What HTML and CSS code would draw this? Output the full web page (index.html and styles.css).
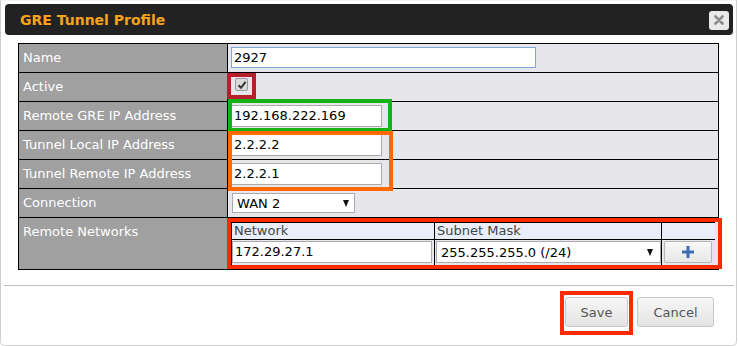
FILE: index.html
```html
<!DOCTYPE html>
<html>
<head>
<meta charset="utf-8">
<link rel="stylesheet" href="styles.css">
</head>
<body>
<div class="dialog">
  <div class="titlebar">
    <span class="title">GRE Tunnel Profile</span>
    <span class="close"><svg width="10" height="10" viewBox="0 0 10 10"><path d="M1.5 1.5L8.5 8.5M8.5 1.5L1.5 8.5" stroke="#8c8c8c" stroke-width="2.6" stroke-linecap="round"/></svg></span>
  </div>
  <div class="form">
    <div class="lbl">Name</div>
    <div class="val"><div class="input name-input">2927</div></div>
    <div class="lbl">Active</div>
    <div class="val"><span class="check"><svg width="10" height="10" viewBox="0 0 10 10"><path d="M1.5 5.2L4 7.8L8.6 1.8" fill="none" stroke="#333" stroke-width="2"/></svg></span></div>
    <div class="lbl">Remote GRE IP Address</div>
    <div class="val"><div class="input ip-input">192.168.222.169</div></div>
    <div class="lbl">Tunnel Local IP Address</div>
    <div class="val"><div class="input ip-input">2.2.2.2</div></div>
    <div class="lbl">Tunnel Remote IP Address</div>
    <div class="val"><div class="input ip-input">2.2.2.1</div></div>
    <div class="lbl">Connection</div>
    <div class="val"><div class="select conn-select"><span>WAN 2</span><span class="arrow"></span></div></div>
    <div class="lbl">Remote Networks</div>
    <div class="val net-cell">
      <div class="nets">
        <div class="nh">Network</div>
        <div class="nh">Subnet Mask</div>
        <div class="nh"></div>
        <div class="nc"><div class="input net-input">172.29.27.1</div></div>
        <div class="nc"><div class="select mask-select"><span>255.255.255.0 (/24)</span><span class="arrow"></span></div></div>
        <div class="nc"><div class="addbtn"><svg width="12" height="12" viewBox="0 0 12 12"><rect x="0" y="4.5" width="12" height="3" fill="#3b6db4"/><rect x="4.5" y="0" width="3" height="12" fill="#3b6db4"/></svg></div></div>
      </div>
    </div>
  </div>
  <div class="sep"></div>
  <div class="footer">
    <button class="btn save">Save</button>
    <button class="btn cancel">Cancel</button>
  </div>
  <div class="mark mark-active"></div>
  <div class="mark mark-green"></div>
  <div class="mark mark-orange"></div>
  <div class="mark mark-nets"></div>
  <div class="mark mark-save"></div>
</div>
</body>
</html>
```
FILE: styles.css
```css
html, body {
  margin: 0;
  padding: 0;
  background: #fff;
}
body {
  font-family: "DejaVu Sans", Verdana, sans-serif;
  font-size: 13px;
  color: #000;
}
.dialog {
  position: relative;
  box-sizing: border-box;
  width: 737px;
  height: 346px;
  border: 1px solid #cfcfcf;
  border-top-color: #f4f4f4;
  border-radius: 0 0 5px 5px;
}
.titlebar {
  margin: 3px 0 0 4px;
  width: 728px;
  height: 31px;
  background: #222;
  border-radius: 4px;
  display: flex;
  align-items: center;
  justify-content: space-between;
  box-sizing: border-box;
  padding: 0 4px 0 15px;
}
.title {
  color: #f5a31e;
  font-weight: bold;
  font-size: 14px;
}
.close {
  width: 20px;
  height: 19px;
  background: #e9e9e9;
  border-radius: 3px;
  display: flex;
  align-items: center;
  justify-content: center;
  margin-top: 1px;
}
.form {
  margin: 8px 0 0 17px;
  width: 701px;
  display: grid;
  grid-template-columns: 208px 490px;
  grid-template-rows: 28px 28px 28px 28px 28px 28px 51px;
  gap: 1px;
  padding: 1px;
  box-sizing: border-box;
  background: #000;
}
.lbl {
  background: #a0a0a0;
  color: #fff;
  padding: 6px 0 0 4px;
  line-height: 16px;
  white-space: nowrap;
}
.val {
  background: #e6e6eb;
  padding: 3px 0 0 3px;
}
.input {
  box-sizing: border-box;
  height: 22px;
  border: 1px solid #aaa;
  background: #fff;
  padding: 0 2px;
  line-height: 20px;
  white-space: nowrap;
}
.name-input {
  width: 305px;
  height: 21px;
  line-height: 19px;
  border-color: #7ea6d8;
}
.ip-input {
  width: 151px;
}
.check {
  display: flex;
  align-items: center;
  justify-content: center;
  box-sizing: border-box;
  width: 13px;
  height: 13px;
  margin: 2px 0 0 4px;
  border: 1px solid #9a9a9a;
  border-radius: 2px;
  background: #dcdcdc;
}
.select {
  box-sizing: border-box;
  display: flex;
  align-items: center;
  justify-content: space-between;
  background: #fff;
  border: 1px solid #aaa;
  padding: 0 5px 0 4px;
  white-space: nowrap;
}
.conn-select {
  width: 123px;
  height: 20px;
  margin: 1px 0 0 1px;
}
.arrow {
  width: 0;
  height: 0;
  border-left: 3.5px solid transparent;
  border-right: 3.5px solid transparent;
  border-top: 7px solid #111;
}
.net-cell {
  padding: 4px 0 0 3px;
}
.nets {
  width: 484px;
  display: grid;
  grid-template-columns: 202px 226px 53px;
  grid-template-rows: 16px 25px;
  gap: 1px;
  padding: 1px;
  box-sizing: border-box;
  background: #000;
}
.nh {
  background: #e9eff9;
  color: #444;
  line-height: 16px;
  padding-left: 2px;
}
.nc {
  background: #e6e6eb;
  padding: 1px 1px 0 1px;
}
.net-input {
  width: 200px;
  height: 22px;
  margin-left: -1px;
}
.mask-select {
  width: 225px;
  height: 22px;
  border-color: #aaa;
  padding-right: 7px;
}
.addbtn {
  box-sizing: border-box;
  width: 48px;
  height: 22px;
  margin-left: 1px;
  border: 1px solid #b5b5b5;
  border-radius: 2px;
  background: linear-gradient(#f8f8f8, #e7e7e7);
  display: flex;
  align-items: center;
  justify-content: center;
}
.sep {
  margin: 15px 2px 0 3px;
  height: 1px;
  background: #bdbdbd;
}
.footer {
  display: flex;
  justify-content: flex-end;
  gap: 9px;
  padding: 11px 22px 0 0;
}
.btn {
  box-sizing: border-box;
  height: 30px;
  border: 1px solid #c8c8c8;
  border-radius: 3px;
  background: linear-gradient(#f6f6f6, #e4e4e4);
  color: #555;
  font-family: "DejaVu Sans", Verdana, sans-serif;
  font-size: 13px;
  padding: 0;
}
.save {
  width: 63px;
}
.cancel {
  width: 77px;
}
.mark {
  position: absolute;
  box-sizing: border-box;
  border: 4px solid red;
}
.mark-active {
  left: 226px;
  top: 72px;
  width: 29px;
  height: 26px;
  border-color: #b3222c;
}
.mark-green {
  left: 227px;
  top: 98px;
  width: 164px;
  height: 33px;
  border-color: #15b315;
}
.mark-orange {
  left: 227px;
  top: 130px;
  width: 165px;
  height: 60px;
  border-color: #ff6a00;
}
.mark-nets {
  left: 226px;
  top: 217px;
  width: 495px;
  height: 51px;
  border-color: #ff2a00;
}
.mark-save {
  left: 559px;
  top: 290px;
  width: 73px;
  height: 44px;
  border-color: #ff2a00;
}
```
